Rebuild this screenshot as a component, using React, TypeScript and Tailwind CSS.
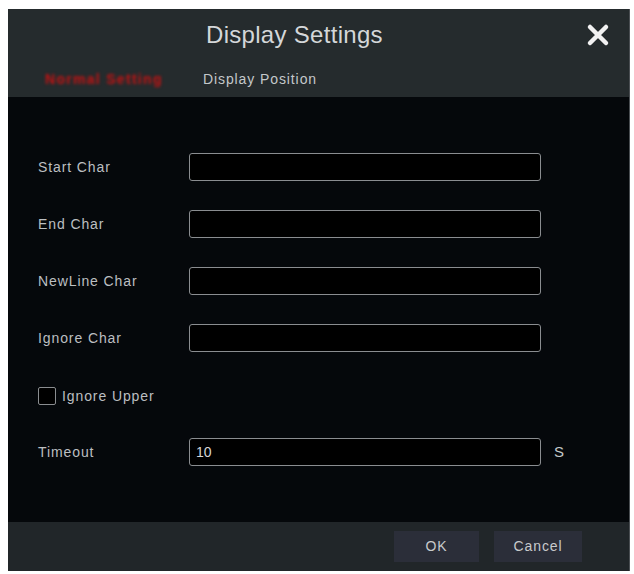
import React from 'react';

const font = { fontFamily: '"Liberation Sans", Arial, sans-serif' };

const fields = ['Start Char', 'End Char', 'NewLine Char', 'Ignore Char'];

const CloseIcon = () => (
  <svg width="24" height="24" viewBox="0 0 24 24" fill="none">
    <path d="M4 4L20 20M20 4L4 20" stroke="#f2f2f2" strokeWidth="4.5" strokeLinecap="round" />
  </svg>
);

const Field: React.FC<{ label: string; value?: string }> = ({ label, value = '' }) => (
  <div className="flex items-center h-[28px]">
    <span className="w-[151px] text-[14px] tracking-[0.9px] text-[#bcbfc1]">{label}</span>
    <div className="w-[352px] h-[28px] rounded-[3px] border border-[#8a8d90] bg-black flex items-center px-[6px] text-[14px] text-[#d6d6d6]">
      {value}
    </div>
  </div>
);

const App: React.FC = () => {
  return (
    <div className="w-[634px] h-[574px] bg-white pt-[9px] pl-[8px]" style={font}>
      <div className="w-[622px] h-[562px] flex flex-col bg-[#05080b] border-r border-[#4a4e52]">
        {/* header: title + tabs */}
        <div className="bg-[#252b2d] h-[88px] flex flex-col">
          <div className="h-[52px] flex items-center pl-[198px] pr-[19px]">
            <h1 className="text-[24px] tracking-[0.3px] text-[#d4d7d9]">Display Settings</h1>
            <div className="ml-auto flex">
              <CloseIcon />
            </div>
          </div>
          <div className="h-[36px] flex items-center pl-[37px] text-[14px] tracking-[0.9px]">
            <span className="w-[158px] text-[#c41212] font-bold tracking-[1.3px] blur-[1.4px]">Normal Setting</span>
            <span className="text-[#c4c8ca]">Display Position</span>
          </div>
        </div>

        {/* form */}
        <div className="flex-1 flex flex-col pl-[30px] pt-[56px]">
          <div className="flex flex-col gap-[29px]">
            {fields.map((f) => (
              <Field key={f} label={f} />
            ))}
          </div>
          <label className="flex items-center gap-[6px] mt-[35px] h-[18px]">
            <span className="w-[18px] h-[18px] rounded-[2px] border border-[#8a8d90] bg-black" />
            <span className="text-[14px] tracking-[0.9px] text-[#bcbfc1]">Ignore Upper</span>
          </label>
          <div className="flex items-center mt-[33px]">
            <Field label="Timeout" value="10" />
            <span className="ml-[13px] text-[15px] text-[#c4c8ca]">S</span>
          </div>
        </div>

        {/* footer buttons */}
        <div className="h-[49px] bg-[#212629] flex items-center justify-end gap-[15px] pr-[47px]">
          <button className="w-[85px] h-[31px] bg-[#2b2e39] text-[14px] tracking-[0.9px] text-[#c8cacc]">OK</button>
          <button className="w-[88px] h-[31px] bg-[#2b2e39] text-[14px] tracking-[0.9px] text-[#c8cacc]">Cancel</button>
        </div>
      </div>
    </div>
  );
};

export default App;
